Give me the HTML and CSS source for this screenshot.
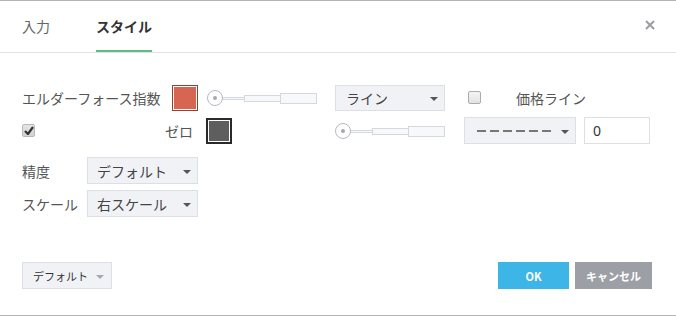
FILE: index.html
```html
<!DOCTYPE html>
<html lang="ja">
<head>
    <meta charset="UTF-8">
    <title>スタイル</title>
    <link rel="stylesheet" href="styles.css">
</head>
<body>
<div class="dialog">
    <div class="header">
        <div class="tab">入力</div>
        <div class="tab active">スタイル</div>
        <svg class="close" width="10" height="10" viewBox="0 0 10 10">
            <path d="M1 1 L9 9 M9 1 L1 9" stroke="#9a9ca3" stroke-width="2"/>
        </svg>
    </div>

    <div class="body">
        <div class="row">
            <span class="label main-label">エルダーフォース指数</span>
            <span class="swatch red"><span></span></span>
            <span class="slider s1"><i class="knob"></i><i class="t1"></i><i class="t2"></i><i class="t3"></i></span>
            <div class="select sel-line">ライン<b class="caret"></b></div>
            <span class="check"></span>
            <span class="label price">価格ライン</span>
        </div>
        <div class="row">
            <span class="check checked">
                <svg width="10" height="9" viewBox="0 0 10 9"><path d="M1 5 L4 8 L9 1" stroke="#333" stroke-width="2.2" fill="none"/></svg>
            </span>
            <span class="label zero">ゼロ</span>
            <span class="swatch gray"><span></span></span>
            <span class="slider s2"><i class="knob"></i><i class="t1"></i><i class="t2"></i><i class="t3"></i></span>
            <div class="select sel-dash"><span class="dashes"></span><b class="caret"></b></div>
            <input class="num" type="text" value="0">
        </div>

        <div class="row row-gap">
            <span class="label short">精度</span>
            <div class="select sel-small">デフォルト<b class="caret"></b></div>
        </div>
        <div class="row">
            <span class="label short">スケール</span>
            <div class="select sel-small">右スケール<b class="caret"></b></div>
        </div>
    </div>

    <div class="footer">
        <div class="btn-default">デフォルト<b class="caret light"></b></div>
        <div class="spacer"></div>
        <button class="btn ok">OK</button>
        <button class="btn cancel">キャンセル</button>
    </div>
</div>
</body>
</html>
```

FILE: styles.css
```css
body {
    margin: 0;
    font-family: "Noto Sans CJK JP", "Noto Sans", sans-serif;
    color: #555;
    background: #fff;
}
.dialog {
    width: 676px;
    height: 314px;
    border-top: 1px solid #b4b4b4;
    border-bottom: 1px solid #b4b4b4;
    display: flex;
    flex-direction: column;
}
.header {
    height: 51px;
    border-bottom: 1px solid #e3e3e3;
    display: flex;
    align-items: stretch;
    padding-left: 22px;
    padding-right: 21px;
}
.tab {
    font-size: 14px;
    line-height: 50px;
    color: #666;
    margin-right: 46px;
    border-bottom: 2px solid transparent;
}
.tab.active {
    color: #333;
    font-weight: bold;
    border-bottom-color: #5ebb8c;
}
.close {
    margin-left: auto;
    align-self: center;
    margin-top: -4px;
}
.body {
    padding: 31px 0 0 22px;
    flex: 1;
}
.row {
    display: flex;
    align-items: center;
    height: 27px;
    margin-bottom: 6px;
}
.row-gap {
    margin-top: 13px;
}
.label {
    font-size: 14px;
    color: #555;
    white-space: nowrap;
}
.main-label {
    width: 141px;
    margin-right: 9px;
}
.zero {
    width: 158px;
    text-align: right;
    margin-right: 13px;
}
.short {
    width: 65px;
}
.price {
    margin-left: 35px;
}
.swatch {
    width: 26px;
    height: 26px;
    box-sizing: border-box;
    padding: 1px;
    background: #fff;
}
.swatch span {
    display: block;
    width: 100%;
    height: 100%;
}
.swatch.red {
    border: 1px solid #a23a2c;
}
.swatch.red span {
    background: #d66552;
}
.swatch.gray {
    border: 2px solid #2a2a2a;
}
.swatch.gray span {
    background: #5e5e5e;
}
.slider {
    width: 110px;
    height: 16px;
    position: relative;
}
.s1 {
    margin-left: 9px;
    margin-right: 18px;
}
.s2 {
    margin-left: 103px;
    margin-right: 19px;
}
.slider i {
    position: absolute;
    box-sizing: border-box;
    background: #f7f8fa;
    border: 1px solid #d5d8de;
}
.slider .knob {
    left: 0;
    top: 0;
    width: 16px;
    height: 16px;
    border-radius: 50%;
    border-color: #b5b9c2;
    background: #fff;
    z-index: 1;
}
.slider .knob::after {
    content: "";
    position: absolute;
    left: 5px;
    top: 5px;
    width: 4px;
    height: 4px;
    border-radius: 50%;
    background: #a8a8a8;
}
.slider .t1 {
    left: 15px;
    top: 7px;
    width: 23px;
    height: 3px;
}
.slider .t2 {
    left: 37px;
    top: 5px;
    width: 37px;
    height: 7px;
}
.slider .t3 {
    left: 73px;
    top: 3px;
    width: 37px;
    height: 11px;
}
.select {
    height: 27px;
    box-sizing: border-box;
    background: #f1f2f6;
    border: 1px solid #dcdfe5;
    font-size: 14px;
    color: #444;
    display: flex;
    align-items: center;
    padding-left: 10px;
    position: relative;
}
.sel-line {
    width: 110px;
    height: 26px;
    margin-right: 23px;
}
.sel-dash {
    width: 112px;
    margin-right: 8px;
    padding-left: 12px;
}
.sel-small {
    width: 111px;
    padding-left: 9px;
}
.caret {
    position: absolute;
    right: 6px;
    top: 50%;
    margin-top: -1px;
    border-left: 4px solid transparent;
    border-right: 4px solid transparent;
    border-top: 4px solid #555;
}
.caret.light {
    border-top-color: #a6a8ad;
    right: 7px;
}
.dashes {
    width: 74px;
    height: 2px;
    margin-top: 1px;
    background: repeating-linear-gradient(90deg, #777 0 9px, transparent 9px 13px);
}
.check {
    width: 13px;
    height: 13px;
    box-sizing: border-box;
    border: 1px solid #a9abb0;
    border-radius: 2px;
    background: linear-gradient(#f4f4f4, #e2e2e2);
    display: flex;
    align-items: center;
    justify-content: center;
}
.check.checked {
    background: linear-gradient(#e6e6e6, #d2d2d2);
    border-color: #b8b8b8;
}
.num {
    width: 66px;
    height: 27px;
    box-sizing: border-box;
    border: 1px solid #dcdfe5;
    padding: 0 8px;
    font-family: "Noto Sans", sans-serif;
    font-size: 14px;
    color: #333;
    outline: none;
}
.footer {
    display: flex;
    align-items: center;
    padding: 0 24px 26px 22px;
}
.btn-default {
    width: 90px;
    height: 27px;
    box-sizing: border-box;
    background: #f1f2f6;
    border: 1px solid #dcdfe5;
    font-size: 11px;
    color: #333;
    display: flex;
    align-items: center;
    padding-left: 10px;
    position: relative;
}
.spacer {
    flex: 1;
}
.btn {
    height: 27px;
    border: none;
    color: #fff;
    font-family: "Noto Sans CJK JP", sans-serif;
    font-weight: bold;
    font-size: 11px;
    padding: 0;
}
.ok {
    width: 71px;
    background: #3db5e6;
    margin-right: 6px;
}
.cancel {
    width: 77px;
    background: #9c9fa6;
}
```
